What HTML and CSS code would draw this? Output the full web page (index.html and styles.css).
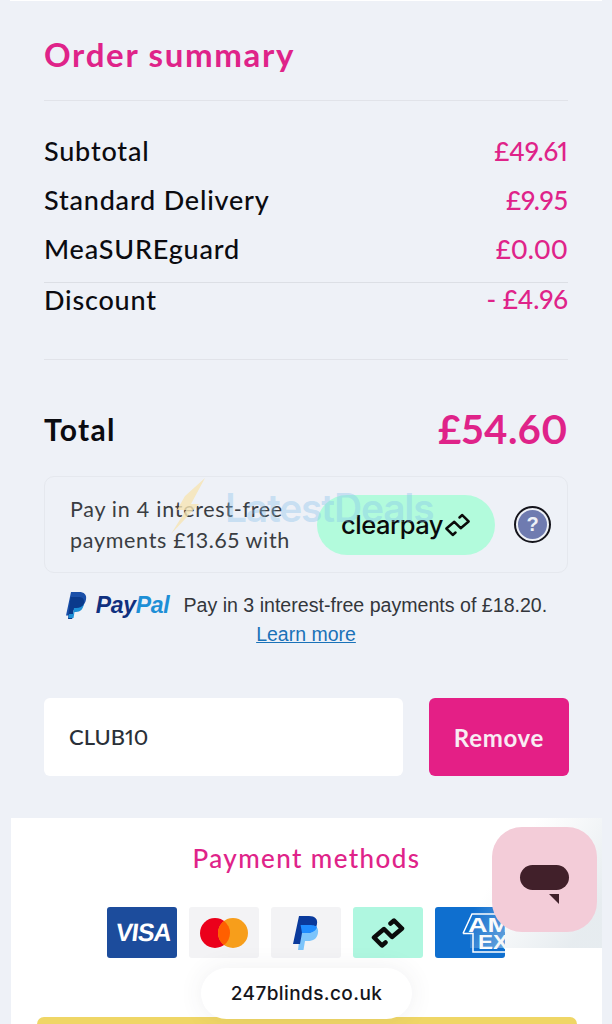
FILE: index.html
```html
<!DOCTYPE html>
<html lang="en">
<head>
<meta charset="utf-8">
<title>Order summary</title>
<link rel="stylesheet" href="styles.css">
</head>
<body>
<div class="top-edge"></div>
<main class="summary">
  <h2 class="title">Order summary</h2>
  <div class="rows">
    <div class="row"><span>Subtotal</span><span class="price">£49.61</span></div>
    <div class="row"><span>Standard Delivery</span><span class="price">£9.95</span></div>
    <div class="row"><span>MeaSUREguard</span><span class="price">£0.00</span></div>
    <div class="row row-discount"><span>Discount</span><span class="price">- £4.96</span></div>
  </div>
  <div class="total"><span>Total</span><span class="total-price">£54.60</span></div>
  <div class="clearpay">
    <p class="clearpay-text">Pay in 4 interest-free payments £13.65 with</p>
    <div class="clearpay-pill">
      <span class="clearpay-word">clearpay</span>
      <svg class="cp-mark" viewBox="0 0 34 30" aria-hidden="true"><path d="M14.500 24.500L11 27.500 3 19.500 13 11 21 19 31 10.500 23 2.500 19.500 5.500" fill="none" stroke="#0b0b0b" stroke-width="3.200" stroke-linejoin="round" stroke-linecap="round"/></svg>
    </div>
    <div class="help"><span>?</span></div>
  </div>
  <div class="paypal-line">
    <svg class="pp-mark" viewBox="0 0 22 27" aria-hidden="true"><path d="M6 0h8c5 0 8 2.500 7 7.500-1 5.500-4.500 8-9 8H9l-1.500 8H1z" fill="#1a4fa8"/><path d="M5.500 5h8c4 0 6 2 5.500 6-.8 4.500-3.500 7-8 7H8.500L7.200 27H3z" fill="#0a3a8c"/><path d="M4 22h4l1-6h2.500c3 0 6-1.500 7.500-4-1 5-3.500 8-8 8h-1.500L8.500 26H3.500z" fill="#1d8fd6"/></svg>
    <span class="pp-word"><b class="pp-pay">Pay</b><b class="pp-pal">Pal</b></span>
    <span class="pp-text">Pay in 3 interest-free payments of £18.20.</span>
  </div>
  <a class="learn" href="#">Learn more</a>
  <form class="promo">
    <div class="promo-input">CLUB10</div>
    <button class="promo-btn" type="button">Remove</button>
  </form>
</main>
<section class="methods">
  <h3 class="methods-title">Payment methods</h3>
  <div class="cards">
    <div class="card card-visa"><span class="visa-word">VISA</span></div>
    <div class="card card-light">
      <svg viewBox="0 0 48 30" class="mc" aria-hidden="true"><circle cx="15" cy="15" r="15" fill="#eb001b"/><circle cx="33" cy="15" r="15" fill="#f79e1b"/><path d="M24 3a15 15 0 0 1 0 24 15 15 0 0 1 0-24z" fill="#ff5f00"/></svg>
    </div>
    <div class="card card-light">
      <svg viewBox="0 0 28 34" class="pp-card" aria-hidden="true"><path d="M9 9h9c6 0 9 3 8 8-1 6-5 8-10 8h-3l-1.500 9H6z" fill="#7cc4fb"/><path d="M7 0h10c6 0 9 3 8 8-1 6-5 9-11 9h-4l-2 11H1z" fill="#0a3a9c"/><path d="M8.600 9h9c4 0 7 1 7.400 2-1 4-5 6-11 6h-4z" fill="#1f8cff"/></svg>
    </div>
    <div class="card card-mint">
      <svg viewBox="0 0 34 30" class="cp-card" aria-hidden="true"><path d="M14.500 24.500L11 27.500 3 19.500 13 11 21 19 31 10.500 23 2.500 19.500 5.500" fill="none" stroke="#0b0b0b" stroke-width="4.500" stroke-linejoin="round" stroke-linecap="round"/></svg>
    </div>
    <div class="card card-amex">
      <svg viewBox="0 0 70 51" class="amex" aria-hidden="true"><path d="M28 26.500L37 7h35M28 26.500h10V45h34" fill="none" stroke="#ffffff" stroke-width="1.500"/><text x="33" y="25" class="amex-t amex-top" textLength="42" lengthAdjust="spacingAndGlyphs">AM</text><text x="43" y="42" class="amex-t amex-bottom" textLength="30" lengthAdjust="spacingAndGlyphs">EX</text></svg>
    </div>
  </div>
  <div class="yellow-bar"></div>
</section>

<div class="watermark" aria-hidden="true">
  <svg class="bolt" viewBox="0 0 34 58"><path d="M34 0L14 18 6 32h9L0 56 28 26h-8z" fill="#f6e5b3" opacity=".8"/></svg>
  <span class="wm-text">LatestDeals</span>
</div>
<div class="toast">247blinds.co.uk</div>
<div class="chat-shadow"></div>
<button class="chat" type="button" aria-label="Chat">
  <span class="chat-bubble"></span>
  <span class="chat-tail"></span>
</button>
</body>
</html>
```

FILE: styles.css
```css
* { box-sizing: border-box; }
html, body { margin: 0; padding: 0; }
body {
  width: 612px;
  height: 1024px;
  overflow: hidden;
  position: relative;
  background: #eef1f7;
  font-family: "Lato", "Open Sans", sans-serif;
  font-variant-numeric: proportional-nums;
  color: #0b0b10;
}
.top-edge { height: 1px; margin: 0 10px; background: #ffffff; }
.summary { padding: 0 44px; }
.title {
  margin: 0;
  box-sizing: content-box;
  height: 66px;
  padding-top: 33px;
  font-size: 33px;
  line-height: 40px;
  font-weight: 700;
  letter-spacing: 1.700px;
  color: #df2389;
  border-bottom: 1px solid #e1e3e9;
}
.rows { padding-top: 25px; padding-bottom: 44px; border-bottom: 1px solid #e1e3e9; }
.row {
  display: flex;
  justify-content: space-between;
  align-items: center;
  height: 49px;
  font-size: 27px;
  font-weight: 500;
  letter-spacing: .8px;
}
.row-discount { height: 33px; margin-top: 9px; border-top: 1px solid #dcdfe5; }
.price { color: #df2389; font-size: 26px; letter-spacing: 0; }
.total {
  display: flex;
  justify-content: space-between;
  align-items: center;
  height: 116px;
  padding-top: 48px;
  padding-bottom: 26px;
  font-size: 30px;
  font-weight: 700;
  letter-spacing: 1.300px;
}
.total-price { font-size: 40px; color: #df2389; font-weight: 700; letter-spacing: .3px; }
.clearpay {
  display: flex;
  align-items: center;
  height: 97px;
  padding: 0 16px 0 25px;
  border: 1px solid #e5e8ee;
  border-radius: 10px;
}
.clearpay-text {
  margin: 0;
  width: 247px;
  font-size: 21.500px;
  line-height: 31px;
  letter-spacing: .7px;
  color: #3a3d42;
}
.clearpay-pill {
  display: flex;
  align-items: center;
  justify-content: center;
  width: 178px;
  height: 60px;
  border-radius: 30px;
  background: #b2fbdc;
}
.clearpay-word { font-family: "Inter", sans-serif; font-size: 25.500px; font-weight: 500; letter-spacing: -.5px; color: #0b0b0b; }
.cp-mark { width: 27px; height: 24px; margin-left: 1px; }
.help {
  width: 37px;
  height: 37px;
  margin-left: auto;
  border: 2px solid #15151c;
  border-radius: 50%;
  display: flex;
  align-items: center;
  justify-content: center;
  background: #eef1f7;
}
.help span {
  width: 29px;
  height: 29px;
  border-radius: 50%;
  background: #6f7bb0;
  color: #eef1f7;
  font-family: "Liberation Sans", sans-serif;
  font-weight: 700;
  font-size: 20px;
  line-height: 29px;
  text-align: center;
}
.paypal-line {
  display: flex;
  align-items: center;
  justify-content: center;
  height: 32px;
  margin-top: 16px;
}
.pp-mark { width: 22px; height: 27px; margin-right: 9px; flex: none; }
.pp-word { font-family: "Liberation Sans", sans-serif; font-style: italic; font-size: 23px; font-weight: 700; margin-right: 14px; letter-spacing: -.3px; }
.pp-pay { color: #10307f; }
.pp-pal { color: #1d8fd6; }
.pp-text { font-family: "Liberation Sans", sans-serif; font-size: 19.600px; color: #33363b; white-space: nowrap; }
.learn {
  display: block;
  height: 26px;
  text-align: center;
  font-family: "Liberation Sans", sans-serif;
  font-size: 19.500px;
  line-height: 26px;
  color: #1a72b8;
  text-decoration: underline;
}
.promo {
  display: flex;
  justify-content: space-between;
  margin-top: 51px;
}
.promo-input {
  width: 359px;
  height: 78px;
  padding-left: 25px;
  border-radius: 6px;
  background: #ffffff;
  font-size: 22px;
  font-weight: 500;
  line-height: 78px;
  color: #2a3038;
}
.promo-btn {
  width: 140px;
  height: 78px;
  margin-right: -1px;
  border: 0;
  border-radius: 6px;
  background: #e41f86;
  color: #f8ecf3;
  font-family: inherit;
  font-size: 24px;
  font-weight: 700;
  letter-spacing: .7px;
}
.methods {
  margin: 42px 10px 0 11px;
  height: 206px;
  padding-top: 21px;
  background: #ffffff;
}
.methods-title {
  margin: 0;
  text-align: center;
  font-size: 26px;
  line-height: 38px;
  font-weight: 500;
  letter-spacing: 1.400px;
  color: #df2389;
}
.cards {
  display: flex;
  gap: 12px;
  justify-content: center;
  margin-top: 30px;
  margin-left: -1px;
}
.card {
  width: 70px;
  height: 51px;
  border-radius: 3px;
  display: flex;
  align-items: center;
  justify-content: center;
  overflow: hidden;
}
.card-visa {
  background: #1c4c9c;
  color: #ffffff;
  font-family: "Liberation Sans", sans-serif;
  font-weight: 700;
  font-size: 25px;
  letter-spacing: -.8px;
}
.visa-word { display: block; margin-left: 3px; transform: skewX(-7deg); }
.card-light { background: #f3f3f5; }
.card-mint { background: #aff7e0; }
.card-amex { background: #0f6fcf; }
.mc { width: 48px; height: 30px; }
.pp-card { width: 28px; height: 34px; }
.cp-card { width: 34px; height: 30px; }
.amex { width: 70px; height: 51px; display: block; }
.amex-t {
  font-family: "Liberation Sans", sans-serif;
  font-weight: 700;
  fill: #ffffff;
}
.amex-top { font-size: 21px; }
.amex-bottom { font-size: 20px; }
.yellow-bar {
  height: 7px;
  margin: 59px 25px 0 26px;
  border-radius: 8px 8px 0 0;
  background: #efd666;
}
.watermark {
  position: absolute;
  left: 171px;
  top: 478px;
  display: flex;
  align-items: flex-start;
  pointer-events: none;
}
.bolt { width: 34px; height: 58px; }
.wm-text {
  margin-left: 20px;
  margin-top: 6px;
  font-family: "Inter", sans-serif;
  font-size: 39px;
  font-weight: 600;
  letter-spacing: -1.200px;
  color: rgba(130, 190, 235, .36);
  white-space: nowrap;
}
.toast {
  position: absolute;
  left: 201px;
  top: 968px;
  width: 211px;
  height: 51px;
  border-radius: 26px;
  background: #ffffff;
  box-shadow: 0 0 24px rgba(60, 70, 80, .08);
  font-family: "Inter", sans-serif;
  font-size: 19px;
  font-weight: 500;
  letter-spacing: .4px;
  line-height: 52px;
  text-align: center;
  color: #15151a;
}
.chat-shadow {
  position: absolute;
  left: 470px;
  top: 818px;
  width: 132px;
  height: 130px;
  background: linear-gradient(125deg, rgba(228, 234, 238, 0) 30%, rgba(228, 234, 238, .9) 85%);
}
.chat {
  position: absolute;
  left: 492px;
  top: 827px;
  width: 105px;
  height: 105px;
  padding: 0;
  border: 0;
  border-radius: 30px;
  background: #f3ccd8;
}
.chat-bubble {
  position: absolute;
  left: 28px;
  top: 38px;
  width: 49px;
  height: 25px;
  border-radius: 13px;
  background: #41202a;
}
.chat-tail {
  position: absolute;
  left: 57px;
  top: 67px;
  width: 10px;
  height: 10px;
  background: #41202a;
  clip-path: polygon(0 0, 100% 0, 100% 100%);
}
```
